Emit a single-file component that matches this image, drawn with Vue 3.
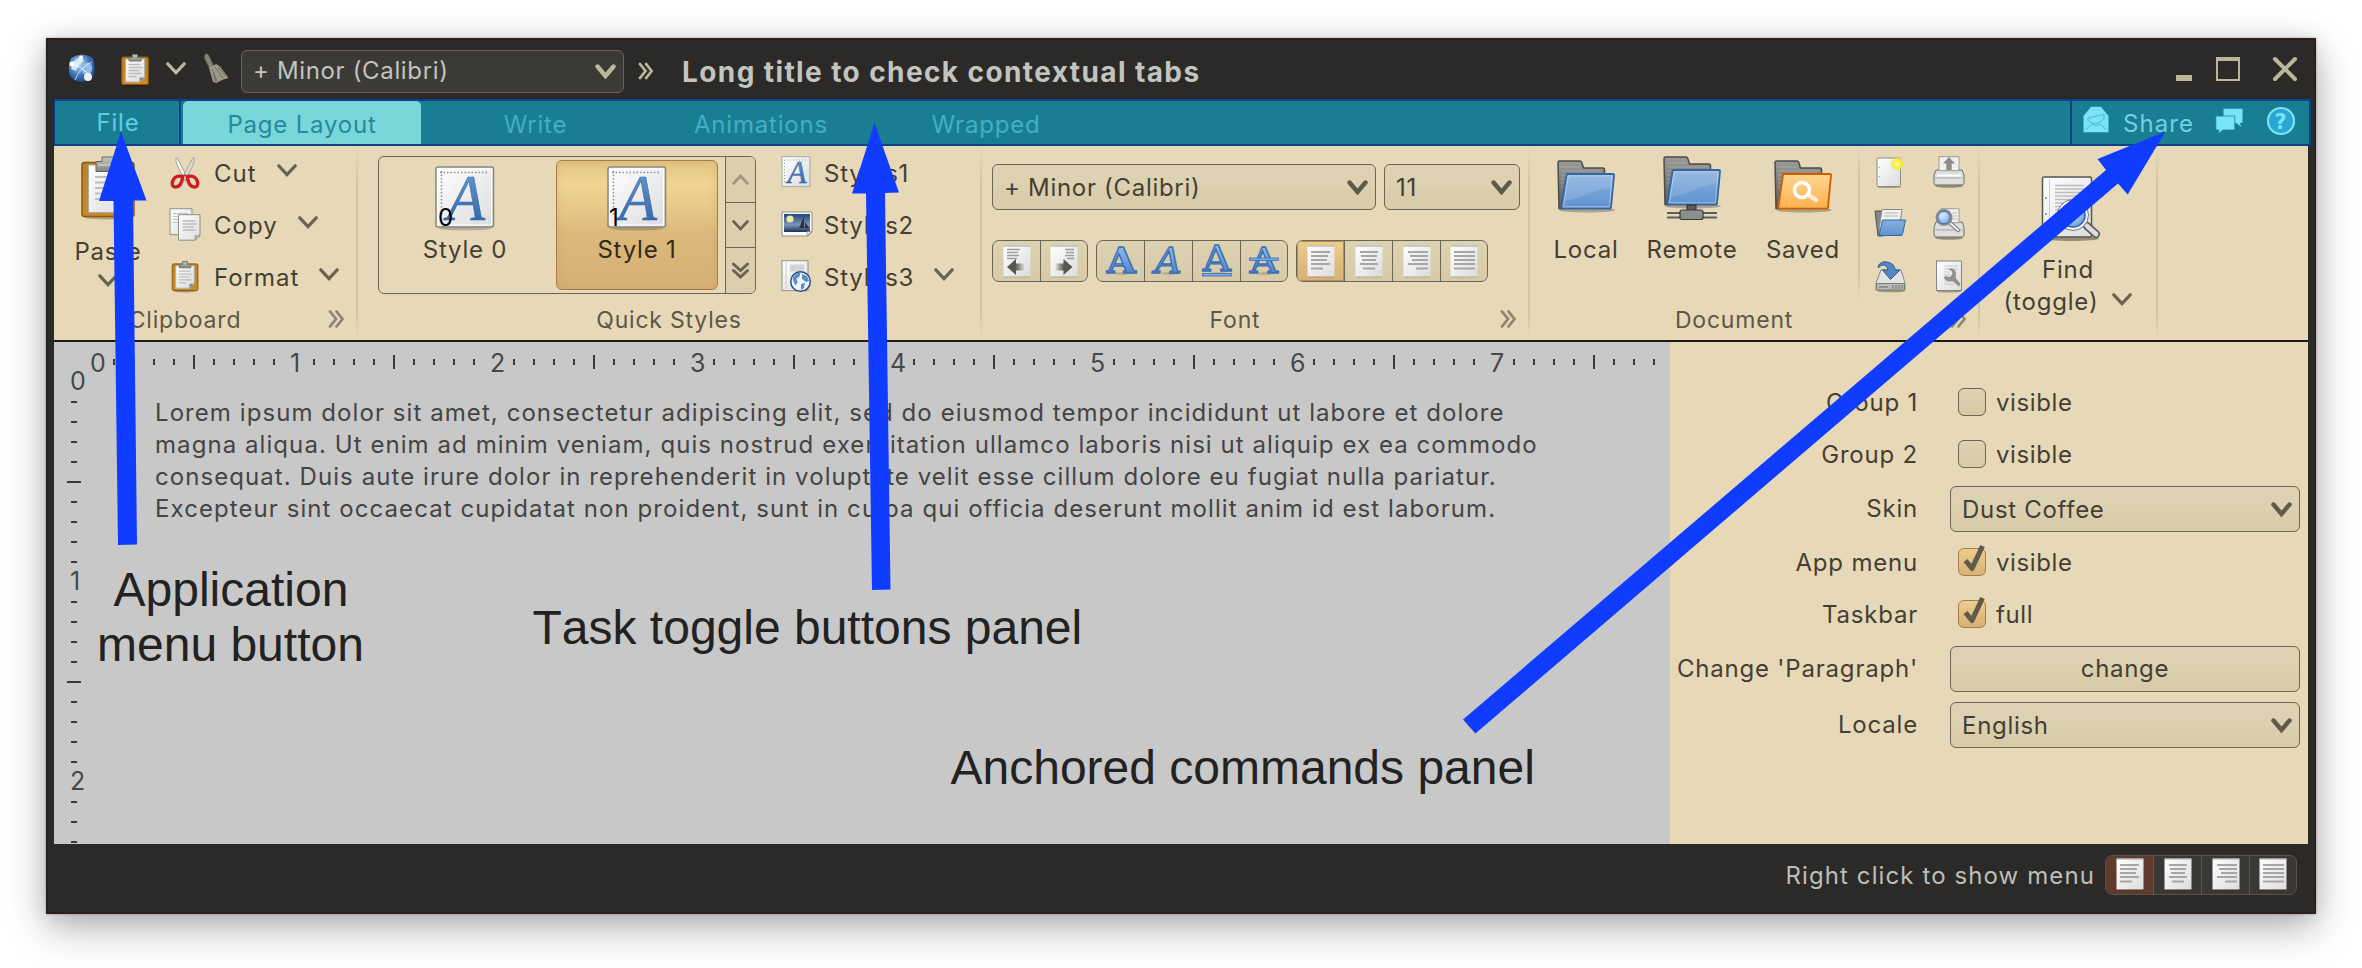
<script setup>
const tabs = [
  { name: 'Page Layout', w: 238, active: true },
  { name: 'Write', w: 229 },
  { name: 'Animations', w: 222 },
  { name: 'Wrapped', w: 228 },
]
const clipboard = [
  { name: 'Cut', icon: 'cut' },
  { name: 'Copy', icon: 'copy' },
  { name: 'Format', icon: 'clip' },
]
const styles = [
  { name: 'Styles1' },
  { name: 'Styles2', icon: 'image' },
  { name: 'Styles3', icon: 'web', more: true },
]
const folders = [
  { name: 'Local', icon: 'local', cls: 'f-local' },
  { name: 'Remote', icon: 'remote', cls: 'f-remote' },
  { name: 'Saved', icon: 'saved', cls: 'f-saved' },
]
const docActions = ['new', 'print', 'open', 'preview', 'save', 'props']
const aligns = ['left', 'center', 'right', 'fill']
const letters = [
  { kind: 'bold', weight: 'bold', slant: 'normal', len: 29 },
  { kind: 'italic', weight: 'normal', slant: 'italic', len: 27 },
  { kind: 'under', weight: 'normal', slant: 'normal', len: 28, bar: 29.5 },
  { kind: 'strike', weight: 'normal', slant: 'normal', len: 28, bar: 14 },
]

const hTicks = []
for (let i = 1; i <= 78; i++) if (i % 10) hTicks.push({ p: 40 + i * 20, big: i % 10 === 5 })
const vTicks = []
for (let i = 1; i <= 23; i++) if (i % 10) vTicks.push({ p: 11 + i * 20, big: i % 10 === 5 })

const lorem = [
  'Lorem ipsum dolor sit amet, consectetur adipiscing elit, sed do eiusmod tempor incididunt ut labore et dolore',
  'magna aliqua. Ut enim ad minim veniam, quis nostrud exercitation ullamco laboris nisi ut aliquip ex ea commodo',
  'consequat. Duis aute irure dolor in reprehenderit in voluptate velit esse cillum dolore eu fugiat nulla pariatur.',
  'Excepteur sint occaecat cupidatat non proident, sunt in culpa qui officia deserunt mollit anim id est laborum.',
]
const form = [
  { label: 'Group 1', kind: 'check', text: 'visible', on: false },
  { label: 'Group 2', kind: 'check', text: 'visible', on: false },
  { label: 'Skin', kind: 'select', text: 'Dust Coffee' },
  { label: 'App menu', kind: 'check', text: 'visible', on: true },
  { label: 'Taskbar', kind: 'check', text: 'full', on: true },
  { label: "Change 'Paragraph'", kind: 'button', text: 'change' },
  { label: 'Locale', kind: 'select', text: 'English' },
]
</script>

<template>
  <div class="desktop">
    <svg class="sprite" aria-hidden="true">
      <defs>
        <linearGradient id="gPaper" x1="0" y1="0" x2="1" y2="1"><stop offset="0" stop-color="#fff" /><stop offset="1" stop-color="#dcdcdc" /></linearGradient>
        <linearGradient id="gBoard" x1="0" y1="0" x2="0" y2="1"><stop offset="0" stop-color="#b9822c" /><stop offset="1" stop-color="#c98a2b" /></linearGradient>
        <linearGradient id="gMetal" x1="0" y1="0" x2="0" y2="1"><stop offset="0" stop-color="#c6c8c2" /><stop offset="1" stop-color="#83857f" /></linearGradient>
        <linearGradient id="gBlue" x1="0" y1="0" x2="0" y2="1"><stop offset="0" stop-color="#88b0de" /><stop offset="1" stop-color="#5f93cf" /></linearGradient>
        <linearGradient id="gInk" x1="0" y1="0" x2="0" y2="1"><stop offset="0" stop-color="#6d9ed4" /><stop offset="1" stop-color="#2b5fa5" /></linearGradient>
        <linearGradient id="gLetter" x1="0" y1="0" x2="0" y2="1"><stop offset="0" stop-color="#a9c6ea" /><stop offset="1" stop-color="#3d7bd0" /></linearGradient>
        <linearGradient id="gOrange" x1="0" y1="0" x2="0" y2="1"><stop offset="0" stop-color="#ffd591" /><stop offset="1" stop-color="#fdb14e" /></linearGradient>
        <linearGradient id="gFolder" x1="0" y1="0" x2="0" y2="1"><stop offset="0" stop-color="#9a9a98" /><stop offset="1" stop-color="#5d5d5b" /></linearGradient>
        <linearGradient id="gSky" x1="0" y1="0" x2="0" y2="1"><stop offset="0" stop-color="#24437a" /><stop offset=".6" stop-color="#7e97b7" /><stop offset="1" stop-color="#1d3055" /></linearGradient>
        <linearGradient id="gArrL" x1="1" y1="0" x2="0" y2="0"><stop offset="0" stop-color="#555753" stop-opacity=".1" /><stop offset=".5" stop-color="#555753" /></linearGradient>
        <linearGradient id="gArrR" x1="0" y1="0" x2="1" y2="0"><stop offset="0" stop-color="#555753" stop-opacity=".1" /><stop offset=".5" stop-color="#555753" /></linearGradient>
        <radialGradient id="gGlobe" cx=".4" cy=".35" r=".7"><stop offset="0" stop-color="#b4d6f6" /><stop offset=".6" stop-color="#3c74b8" /><stop offset="1" stop-color="#1c437f" /></radialGradient>
        <radialGradient id="gStar"><stop offset="0" stop-color="#fffde0" /><stop offset=".35" stop-color="#fff34a" /><stop offset=".7" stop-color="#f8e93a" stop-opacity=".85" /><stop offset="1" stop-color="#f5e338" stop-opacity="0" /></radialGradient>
        <radialGradient id="gLens" cx=".4" cy=".35" r=".7"><stop offset="0" stop-color="#dceafa" /><stop offset="1" stop-color="#6f9fd6" /></radialGradient>
      </defs>
      <symbol id="chev" viewBox="0 0 20 13"><path d="M1.8 1.8 10 10.6 18.200 1.800" fill="none" stroke="currentColor" stroke-width="3.200" stroke-linecap="round" /></symbol>
      <symbol id="vee" viewBox="0 0 21 15"><path d="M2.500 2.500 10.500 12 18.500 2.500" fill="none" stroke="currentColor" stroke-width="4.400" stroke-linecap="round" /></symbol>
      <symbol id="more" viewBox="0 0 17 18"><path d="M2 1.500 8 9 2 16.500M8.500 1.500l6 7.500-6 7.500" fill="none" stroke="currentColor" stroke-width="2.800" stroke-linecap="round" /></symbol>
      <symbol id="down2" viewBox="0 0 17 17"><path d="M1.500 2 8.500 8.500 15.500 2M1.500 8.500l7 6.500 7-6.500" fill="none" stroke="currentColor" stroke-width="3" stroke-linecap="round" /></symbol>
      <symbol id="globe" viewBox="0 0 32 32">
        <path d="M5 5q11-7 22 0 3 10 1 18-3 5-12 6-9-1-12-6-3-8 1-18z" fill="url(#gGlobe)" />
        <path d="M7 9q5-5 9-5l2 4-5 4-3 6-5-2z" fill="#e6f2fc" opacity=".85" />
        <path d="M18 10q6-2 8 3 1 7-4 10-5-1-6-6 0-5 2-7z" fill="#8fbbe6" />
        <path d="M4 11q10 0 22 14M9 27q4-12 17-18" fill="none" stroke="#fff" opacity=".7" />
        <circle cx="6" cy="11" r="2.500" fill="#fff" /><circle cx="22" cy="24" r="4" fill="#fff" opacity=".9" /><circle cx="15" cy="4.500" r="2" fill="#fff" />
      </symbol>
      <symbol id="clip" viewBox="0 0 32 34">
        <ellipse cx="16" cy="32" rx="12" ry="1.500" fill="#000" opacity=".3" />
        <rect x="2.800" y="4" width="26.500" height="27.500" rx="1.500" fill="url(#gBoard)" stroke="#8f5902" />
        <path d="M6.500 6h19v18.500l-5 4.500h-14z" fill="url(#gPaper)" stroke="#b5b5b0" />
        <path d="M25.500 24.500h-5V29z" fill="#888a85" />
        <path d="M9.500 11.500h12M9.500 14.500h14M9.500 17.500h11M9.500 20.500h13M9.500 23.500h8" stroke="#bcbcbc" stroke-width="1.300" />
        <path d="M10 8V4.500h3.500V1.500h5v3H22V8z" fill="url(#gMetal)" stroke="#75776f" />
      </symbol>
      <symbol id="paste" viewBox="0 0 54 64">
        <ellipse cx="27" cy="61" rx="24" ry="2.500" fill="#000" opacity=".25" />
        <rect x="1" y="6.500" width="52" height="54" rx="2.500" fill="url(#gBoard)" stroke="#8f5902" stroke-width="1.500" />
        <path d="M7.500 9h39v38l-8 9.500h-31z" fill="url(#gPaper)" stroke="#a9a9a5" />
        <path d="M14 21h25M14 26.500h28M14 32h24M14 37.500h27M14 43h18" stroke="#bdbdbd" stroke-width="2" />
        <path d="M15 15.500V5.500h6V1h13v4.500h5.500v10z" fill="url(#gMetal)" stroke="#666860" />
        <path d="M17 9h21" stroke="#e0e0dc" />
      </symbol>
      <symbol id="broom" viewBox="0 0 30 32">
        <path d="M5 1.500q2-1.500 3.500.500l5.500 12-4 2.500L4.500 5z" fill="#858575" stroke="#66665a" stroke-width=".8" />
        <path d="m9 15 7-4 4 2.500 8.500 11.500q-6 1-12 5l-3.500-1z" fill="#99988a" />
        <path d="m12 16 5 12m-2-14 8 11m-10-5 3 9m2-15 7 8" stroke="#6f6e62" fill="none" />
      </symbol>
      <symbol id="cut" viewBox="0 0 32 33">
        <path d="M7 1.500q1.500 0 3 4l9 17-3 2L8.500 10Q6 4 7 1.500z" fill="#f1f1ef" stroke="#9a9a96" stroke-width=".9" />
        <path d="M25 1.500q-1.500 0-3 4l-9 17 3 2L23.500 10Q26 4 25 1.500z" fill="#dededb" stroke="#9a9a96" stroke-width=".9" />
        <path d="M13.800 20.500q-9-2-10.600 6.500Q3 31 6.500 31q6 0 7.300-10.500zM18.200 20.500q9-2 10.600 6.500.2 4-3.300 4-6 0-7.300-10.500z" fill="none" stroke="#cc1f1f" stroke-width="3.400" />
        <circle cx="16" cy="19" r="1" fill="#666" />
      </symbol>
      <symbol id="copy" viewBox="0 0 32 33">
        <path d="M1 .7h22v26H1z" fill="url(#gPaper)" stroke="#8f8f8b" />
        <path d="M4 5.500h15M4 8.500h9M4 11.500h9M4 14.500h8" stroke="#c3c3c3" />
        <path d="M9.500 6.700h21.500v21l-5 4.500H9.500z" fill="url(#gPaper)" stroke="#8f8f8b" />
        <path d="M13.500 13h13M13.500 16h14M13.500 19h11M13.500 22h13" stroke="#bbb" stroke-width="1.300" />
        <path d="M31 27.500h-5V32z" fill="#b9b9b5" stroke="#8f8f8b" stroke-width=".6" />
      </symbol>
      <symbol id="image" viewBox="0 0 32 33">
        <path d="M1 4h30v20l-4 4H1z" fill="#fbfbfb" stroke="#8c8e8a" />
        <rect x="3" y="6" width="26" height="18" fill="url(#gSky)" />
        <circle cx="9" cy="11" r="3.600" fill="#fff7a8" opacity=".9" />
        <path d="m23 9-5 11h5zM24 14l4 6h-4z" fill="#2b2d38" />
        <path d="M31 23.500h-5V28z" fill="#ddd" stroke="#888" stroke-width=".6" />
      </symbol>
      <symbol id="web" viewBox="0 0 32 33">
        <rect x="1" y=".7" width="26" height="30" fill="url(#gPaper)" stroke="#8d8f8b" />
        <path d="M9 4.500h14v7H9z" fill="#d3d3d3" /><path d="M5 2v28" stroke="#ccc" />
        <circle cx="19.500" cy="21.500" r="9.800" fill="#eef4fb" stroke="#2c4b8a" stroke-width="1.500" />
        <path d="M11.500 18q3-5 8-5.500l-1 4-3 2 1 4-2 3q-2-3-3-7.500zM21 14l5 2 2 5-3 1-4-3zM20 24l4-1-1 5-3 2z" fill="#5b8dc6" />
      </symbol>
      <symbol id="backfolder" viewBox="0 0 58 64">
        <ellipse cx="30" cy="50" rx="28" ry="2.500" fill="#000" opacity=".25" />
        <path d="M1 2.500q0-1.500 1.500-1.500H23q1.500 0 2 2l1.500 5H46q1.500 0 1.500 2v34L4 48.500H2z" fill="url(#gFolder)" stroke="#4c4c4a" stroke-width="1.500" />
        <path d="M4 7h19M4 11h40M4 15h40M4 19h8M4 23h5M4 27h4" stroke="#b4b4b0" stroke-width="1" opacity=".6" />
      </symbol>
      <symbol id="front" viewBox="0 0 58 64">
        <path d="M9.500 15q0-1 1.300-1H56q1.200 0 1 1.300l-3 32.200q-.2 1.200-1.400 1.200H5.200q-1.200 0-1-1.200z" fill="url(#gBlue)" stroke="#3465a4" stroke-width="1.800" />
        <path d="M11 16h44.500l-1 12Q40 29 32 33.500T7.500 41z" fill="#fff" opacity=".13" />
        <path d="M11.200 15.800h44l-2.800 31h-46z" fill="none" stroke="#fff" opacity=".4" />
      </symbol>
      <symbol id="local" viewBox="0 0 58 64"><g transform="translate(0 4)"><use href="#backfolder" width="58" height="64" /><use href="#front" width="58" height="64" /></g></symbol>
      <symbol id="remote" viewBox="0 0 58 64">
        <use href="#backfolder" width="58" height="64" /><use href="#front" width="58" height="64" />
        <path d="M24 49h9v6h-9z" fill="#5c5c5c" stroke="#2d2d2d" />
        <path d="M4 57h50M4 61.500h50" stroke="#5a5c58" stroke-width="2.200" />
        <rect x="17" y="54" width="23" height="9.500" rx="2" fill="#8d8f8b" stroke="#3a3a3a" stroke-width="1.200" />
      </symbol>
      <symbol id="saved" viewBox="0 0 58 64">
        <g transform="translate(0 4)"><use href="#backfolder" width="58" height="64" />
          <path d="M9 15q0-1 1.300-1H56q1.200 0 1 1.300l-3 32.200q-.2 1.200-1.400 1.200H5.200q-1.200 0-1-1.200z" fill="url(#gOrange)" stroke="#ce5c00" stroke-width="1.800" />
          <circle cx="28" cy="30" r="7.500" fill="none" stroke="#fff" stroke-width="3.600" />
          <path d="m34 34.500 8 5.500" stroke="#fff" stroke-width="4.500" stroke-linecap="round" opacity=".75" /></g>
      </symbol>
      <symbol id="new" viewBox="0 0 32 33">
        <ellipse cx="15" cy="31" rx="12" ry="1" opacity=".3" />
        <rect x="3" y="2" width="23.500" height="28.500" rx="1" fill="url(#gPaper)" stroke="#888a85" />
        <path d="M5.200 11v1M5.200 20v1" stroke="#888" />
        <circle cx="23.500" cy="8" r="7.200" fill="url(#gStar)" />
      </symbol>
      <symbol id="print" viewBox="0 0 32 33">
        <ellipse cx="16" cy="30" rx="14" ry="1.800" opacity=".35" />
        <path d="M3 14h26l2 5v8q0 2-2 2H3q-2 0-2-2v-8z" fill="#dededc" stroke="#6f716d" />
        <path d="M6 .7h20v14H6z" fill="#f0f0ee" stroke="#9b9d99" />
        <path d="m16 1 6 6.500h-3.300V14h-5.400V7.500H10z" fill="#8b8d89" />
        <path d="M4 19.500h24" stroke="#fff" stroke-width="2" /><path d="M2 22h28" stroke="#a8a8a6" />
      </symbol>
      <symbol id="open" viewBox="0 0 32 33">
        <path d="M1 3h8v25H4z" fill="#858783" stroke="#50524f" />
        <path d="M8 1.500h20l-3 20H5z" fill="#f1f1f0" stroke="#8a8c88" />
        <path d="M10.500 5h14M10 8h14" stroke="#b5b5b5" />
        <path d="M8.500 12h23l-3 14.500q-.300 1-1.300 1H5z" fill="url(#gBlue)" stroke="#3465a4" />
      </symbol>
      <symbol id="preview" viewBox="0 0 32 33">
        <ellipse cx="16" cy="30" rx="14" ry="1.800" opacity=".35" />
        <path d="M3 14h26l2 5v8q0 2-2 2H3q-2 0-2-2v-8z" fill="#dededc" stroke="#6f716d" />
        <path d="M8 .7h18v14H8z" fill="#f0f0ee" stroke="#9b9d99" /><path d="M19 5h5M19 8h5M19 11h5" stroke="#bbb" />
        <path d="M2 22h28" stroke="#a8a8a6" />
        <path d="m17 15 8 7" stroke="#777975" stroke-width="4.200" stroke-linecap="round" /><path d="m17 15 8 7" stroke="#eee" stroke-width="2.200" stroke-linecap="round" />
        <circle cx="11" cy="9.500" r="7.500" fill="url(#gLens)" stroke="#8b8d89" stroke-width="2" /><circle cx="11" cy="9.500" r="6.200" fill="none" stroke="#3d6fb0" />
      </symbol>
      <symbol id="save" viewBox="0 0 32 33">
        <ellipse cx="17" cy="31" rx="14" ry="1.300" opacity=".3" />
        <path d="M7 10h20l4 13v7H2v-7z" fill="#e4e4e2" stroke="#858783" />
        <path d="M2.500 23.500h28v6.500h-28z" fill="#b9bbb7" stroke="#7b7d79" />
        <path d="M19 25v4M22 25v4M25 25v4M28 25v4M5 27h9" stroke="#6b6d69" />
        <path d="M4 6Q7 1 13 2q8 1.500 8 8h5l-9.500 9.500L8.500 10H14q-1-5-5-5-3 0-4.500 3z" fill="#5587c2" stroke="#2f5c98" />
      </symbol>
      <symbol id="props" viewBox="0 0 32 33">
        <ellipse cx="16" cy="31.500" rx="12" ry="1" opacity=".3" />
        <rect x="3.500" y="1" width="25" height="29.500" fill="url(#gPaper)" stroke="#858783" />
        <path d="M11 6h14M11 9h14M11 12h6M11 15h6M11 18h5M11 21h9M11 24h10" stroke="#c6c6c6" />
        <path d="M15 9q7-2 8 4 .3 3-.500 4.500l5 6.500-1.500 2.500-6.500-5.500q-5 1.500-8.500-2.500l1-2.500 5 1 2.500-3-1-3z" fill="#8f918d" />
      </symbol>
      <symbol id="find" viewBox="0 0 60 68">
        <ellipse cx="30" cy="63.500" rx="28" ry="2.500" opacity=".35" />
        <rect x="1.500" y="2" width="49" height="60" rx="1.500" fill="url(#gPaper)" stroke="#555753" stroke-width="1.500" />
        <path d="M8.500 4v56" stroke="#cfcfcf" /><path d="M5 22v2M5 38v2M5 54v2" stroke="#888" stroke-width="1.500" />
        <path d="M14 10.500h29M14 14h29M14 17.500h29M14 21h29M14 24.500h29M14 28h29M14 31.500h29M14 35h16M14 38.500h12M14 42h12" stroke="#bdbdbd" stroke-width="1.600" />
        <path d="m46 51 9 8" stroke="#555753" stroke-width="8" stroke-linecap="round" /><path d="m46 51 9 8" stroke="#ddd" stroke-width="5" stroke-linecap="round" />
        <circle cx="32" cy="40" r="15.500" fill="#f4f4f4" stroke="#777975" /><circle cx="32" cy="40" r="12" fill="url(#gLens)" stroke="#3465a4" stroke-width="1.600" />
      </symbol>
      <symbol id="pg" viewBox="0 0 28 33"><rect x="1" y="31" width="26" height="1.500" opacity=".18" /><rect x=".5" y=".5" width="27" height="31" fill="url(#gPaper)" /><path d="M.5 1h27" stroke="#a3a5a0" /></symbol>
      <symbol id="al-left" viewBox="0 0 28 33"><use href="#pg" width="28" height="33" /><path d="M4 7h19M4 11h17M4 15h16M4 19h19M4 23.500h12" stroke="#a6a6a6" stroke-width="1.800" /></symbol>
      <symbol id="al-center" viewBox="0 0 28 33"><use href="#pg" width="28" height="33" /><path d="M5 7h18M6 11h16M7 15h14M5 19h18M8 23.500h12" stroke="#a6a6a6" stroke-width="1.800" /></symbol>
      <symbol id="al-right" viewBox="0 0 28 33"><use href="#pg" width="28" height="33" /><path d="M5 7h20M7 11h18M9 15h16M5 19h20M13 23.500h12" stroke="#a6a6a6" stroke-width="1.800" /></symbol>
      <symbol id="al-fill" viewBox="0 0 28 33"><use href="#pg" width="28" height="33" /><path d="M4 7h21M4 11h21M4 15h21M4 19h21M4 23.500h21" stroke="#a6a6a6" stroke-width="1.800" /></symbol>
      <symbol id="outdent" viewBox="0 0 28 33"><use href="#pg" width="28" height="33" /><path d="M4 4.500h13M4 7.500h11M4 10.500h12M4 13.500h10" stroke="#9c9c9c" stroke-width="1.300" /><path d="m4 22 9-8v4.500h8v7h-8V30z" fill="url(#gArrL)" /></symbol>
      <symbol id="indent" viewBox="0 0 28 33"><use href="#pg" width="28" height="33" /><path d="M15 4.500h9M16 7.500h8M15 10.500h9M17 13.500h7" stroke="#9c9c9c" stroke-width="1.300" /><path d="m22.500 22-9-8v4.500h-8v7h8V30z" fill="url(#gArrR)" /></symbol>
    </svg>

    <main class="window">
      <header class="titlebar">
        <svg class="q-globe"><use href="#globe" /></svg>
        <svg class="q-clip"><use href="#clip" /></svg>
        <svg class="chev q-chev"><use href="#chev" /></svg>
        <svg class="q-broom"><use href="#broom" /></svg>
        <div class="dark-combo"><span>+ Minor (Calibri)</span><svg class="vee"><use href="#vee" /></svg></div>
        <svg class="more q-more"><use href="#more" /></svg>
        <h1>Long title to check contextual tabs</h1>
        <div class="controls">
          <i class="min"></i><i class="max"></i>
          <svg class="close" viewBox="0 0 26 26"><path d="M3 3l20 20M23 3 3 23" stroke="currentColor" stroke-width="4" stroke-linecap="round" /></svg>
        </div>
      </header>

      <nav class="taskbar">
        <button class="file">File</button>
        <button v-for="t in tabs" :key="t.name" class="tab" :class="{ active: t.active }" :style="{ width: t.w + 'px' }">{{ t.name }}</button>
        <div class="anchored">
          <svg class="a-mail" viewBox="0 0 26 27">
            <path d="M.5 10 8 .8h10L25.500 10v16.200H.5z" fill="#79e4f5" />
            <path d="m5 12 16-3.500v4.500q-5 4.500-9 4.500t-7-3zM2 24l6-5M24 24l-6-5M8 18q5 3 10 0" fill="none" stroke="#4fb9cf" />
          </svg>
          <span>Share</span>
          <svg class="a-chat" viewBox="0 0 29 27">
            <path d="M8.500.8h19v14h-2.500l1 4-5-4H8.500z" fill="#79e4f5" />
            <path d="M.8 8h19v14H8l-5 4 .8-4h-3z" fill="#79e4f5" stroke="#1f7f93" stroke-width=".8" />
          </svg>
          <svg class="a-help" viewBox="0 0 30 30">
            <circle cx="15" cy="15" r="13" fill="#2ba5d4" stroke="#79e4f5" stroke-width="2.200" />
            <text x="15" y="22.500" text-anchor="middle" font-family="'DejaVu Sans', sans-serif" font-weight="bold" font-size="21" fill="#79e4f5">?</text>
          </svg>
        </div>
      </nav>

      <section class="ribbon">
        <div class="band clipboard">
          <div class="body">
            <div class="paste"><svg><use href="#paste" /></svg><span>Paste</span><svg class="chev"><use href="#chev" /></svg></div>
            <ul class="list">
              <li v-for="c in clipboard" :key="c.name"><svg class="ico"><use :href="'#' + c.icon" /></svg><span>{{ c.name }}</span><svg class="chev"><use href="#chev" /></svg></li>
            </ul>
          </div>
          <footer><span>Clipboard</span><svg class="more"><use href="#more" /></svg></footer>
        </div>

        <div class="band quick">
          <div class="body">
            <div class="gallery">
              <div v-for="n in [0, 1]" :key="n" class="cell" :class="{ active: n === 1 }">
                <div class="thumb">
                  <svg viewBox="0 0 60 66">
                    <ellipse cx="30" cy="62.500" rx="26" ry="2" fill="#000" opacity=".2" />
                    <rect x="1" y="1" width="57.500" height="60" rx="2" fill="url(#gPaper)" stroke="#858783" stroke-width="1.500" />
                    <rect x="3" y="3" width="53.500" height="56" fill="none" stroke="#fff" />
                    <path d="M5 6.500h48M6.500 5v45" stroke="#8d8d8d" stroke-width="1.500" stroke-dasharray="1.500 2" fill="none" />
                    <text x="12" y="53.500" class="serif-a" font-size="65" stroke-width=".5" textLength="38" lengthAdjust="spacingAndGlyphs">A</text>
                  </svg>
                  <b>{{ n }}</b>
                </div>
                <span>Style {{ n }}</span>
              </div>
              <div class="scroll">
                <button class="dim"><svg class="tiny flip"><use href="#chev" /></svg></button>
                <button><svg class="tiny"><use href="#chev" /></svg></button>
                <button><svg class="dbl"><use href="#down2" /></svg></button>
              </div>
            </div>
            <ul class="list styles">
              <li v-for="s in styles" :key="s.name">
                <svg v-if="s.icon" class="ico"><use :href="'#' + s.icon" /></svg>
                <svg v-else class="ico" viewBox="0 0 32 33">
                  <rect x="1" y=".7" width="28" height="30" fill="url(#gPaper)" stroke="#a5a7a3" />
                  <path d="M3 4h24M3.500 4v22" stroke="#9a9a9a" stroke-dasharray="1 2" fill="none" />
                  <text x="6.500" y="26.500" class="serif-a" font-size="31" stroke-width=".5">A</text>
                </svg>
                <span>{{ s.name }}</span><svg v-if="s.more" class="chev"><use href="#chev" /></svg>
              </li>
            </ul>
          </div>
          <footer><span>Quick Styles</span></footer>
        </div>

        <div class="band font">
          <div class="body">
            <div class="row">
              <div class="combo family"><span>+ Minor (Calibri)</span><svg class="vee"><use href="#vee" /></svg></div>
              <div class="combo size"><span>11</span><svg class="vee"><use href="#vee" /></svg></div>
            </div>
            <div class="row strip-row">
              <div class="strip"><button><svg class="page"><use href="#outdent" /></svg></button><button><svg class="page"><use href="#indent" /></svg></button></div>
              <div class="strip">
                <button v-for="l in letters" :key="l.kind">
                  <svg class="letter" viewBox="0 0 32 34">
                    <ellipse cx="17" cy="29.500" rx="9" ry="1.500" opacity=".15" />
                    <text x="1.800" :y="l.kind === 'under' ? 27 : 28.500" class="slab-a" font-size="35" :font-weight="l.weight" :font-style="l.slant" :textLength="l.len" lengthAdjust="spacingAndGlyphs">A</text>
                    <rect v-if="l.bar" x="1.500" :y="l.bar" width="29" height="2.500" fill="#7fa9e2" stroke="#3a6fb5" stroke-width=".8" />
                  </svg>
                </button>
              </div>
              <div class="strip"><button v-for="(a, i) in aligns" :key="a" :class="{ active: !i }"><svg class="page"><use :href="'#al-' + a" /></svg></button></div>
            </div>
          </div>
          <footer><span>Font</span><svg class="more"><use href="#more" /></svg></footer>
        </div>

        <div class="band document">
          <div class="body">
            <div v-for="f in folders" :key="f.name" class="folder" :class="f.cls"><svg><use :href="'#' + f.icon" /></svg><span>{{ f.name }}</span></div>
            <div class="actions"><svg v-for="a in docActions" :key="a" class="ico"><use :href="'#' + a" /></svg></div>
          </div>
          <footer><span>Document</span><svg class="more"><use href="#more" /></svg></footer>
        </div>

        <div class="band find">
          <svg class="find-ico"><use href="#find" /></svg>
          <span>Find</span>
          <div class="toggle"><span>(toggle)</span><svg class="chev"><use href="#chev" /></svg></div>
        </div>
      </section>

      <section class="work">
        <article class="editor">
          <svg class="hruler">
            <rect v-for="t in hTicks" :key="t.p" :x="t.p - 1" :y="t.big ? 13 : 17" width="2" :height="t.big ? 14 : 6" />
            <text v-for="n in 8" :key="n" :x="36 + (n - 1) * 200" y="29.700">{{ n - 1 }}</text>
          </svg>
          <div class="page-row">
            <svg class="vruler">
              <rect v-for="t in vTicks" :key="t.p" :x="t.big ? 13 : 17" :y="t.p - 1" :width="t.big ? 14 : 6" height="2" />
              <text v-for="n in 3" :key="n" x="16" :y="18.700 + (n - 1) * 200">{{ n - 1 }}</text>
            </svg>
            <p><span v-for="l in lorem" :key="l">{{ l }}</span></p>
          </div>
        </article>
        <aside class="panel">
          <div v-for="f in form" :key="f.label" class="field" :class="{ short: f.kind === 'check' }">
            <label>{{ f.label }}</label>
            <div v-if="f.kind === 'check'" class="check">
              <i :class="{ on: f.on }"><svg v-if="f.on" viewBox="0 0 28 32"><path d="M7.500 16.500 14 24.500 24.500 2" fill="none" stroke="#5f5a49" stroke-width="5" stroke-linecap="butt" stroke-linejoin="round" /></svg></i>
              <span>{{ f.text }}</span>
            </div>
            <div v-else-if="f.kind === 'select'" class="combo"><span>{{ f.text }}</span><svg class="vee"><use href="#vee" /></svg></div>
            <button v-else class="combo push">{{ f.text }}</button>
          </div>
        </aside>
      </section>

      <footer class="status">
        <span>Right click to show menu</span>
        <div class="strip dark"><button v-for="(a, i) in aligns" :key="a" :class="{ active: !i }"><svg class="page"><use :href="'#al-' + a" /></svg></button></div>
      </footer>
    </main>

    <svg class="callouts" viewBox="0 0 2362 968">
      <g class="arrows">
        <polygon points="121,131.500 146.500,200.500 133,200.500 137,544.500 118,545 113.500,201 99,201" />
        <polygon points="874.500,123 899,192.500 885,193 890.500,589.500 872,590 866,193.500 852,193.500" />
        <polygon points="2165.500,131.500 2127.700,194.500 2118,183.500 1475.400,733.500 1463,719.500 2106,170 2097.500,159" />
      </g>
      <text x="113.500" y="606">Application</text>
      <text x="97" y="660.500">menu button</text>
      <text x="532.500" y="644" class="loose">Task toggle buttons panel</text>
      <text x="950.500" y="784">Anchored commands panel</text>
    </svg>
  </div>
</template>

<style>
html,
body {
  background: #fff;
  overflow: hidden;
}
</style>

<style scoped>
.desktop {
  position: relative;
  width: 2362px;
  height: 968px;
  overflow: hidden;
  background: #fff;
  font: 400 24px/30px Inter, 'Liberation Sans', sans-serif;
  letter-spacing: 0.8px;
  color: #453e33;
  box-sizing: border-box;
  padding: 38px 46px 54px;
}
.desktop * { box-sizing: border-box; }
.sprite { position: absolute; width: 0; height: 0; }
svg { display: block; flex: none; overflow: visible; }
button { font: inherit; letter-spacing: inherit; color: inherit; background: none; border: 0; padding: 0; margin: 0; }
span { white-space: nowrap; }
.window {
  width: 2270px;
  height: 876px;
  background: #2c2a28;
  padding: 0 8px;
  box-shadow: inset 0 0 0 2px #2a211c, 0 0 2px rgba(0, 0, 0, 0.35), 0 14px 36px rgba(0, 0, 0, 0.3), 0 0 24px rgba(0, 0, 0, 0.08);
}
.chev { width: 20px; height: 13px; color: #6b6352; }
.vee { width: 21px; height: 15px; color: #5f5a49; }
.more { width: 17px; height: 18px; color: #8f866f; }
.ico { width: 32px; height: 33px; }
.serif-a { font-family: 'Liberation Serif', serif; font-style: italic; letter-spacing: 0; fill: url(#gInk); stroke: #3465a4; }
.slab-a { font-family: 'DejaVu Serif', serif; letter-spacing: 0; fill: url(#gLetter); stroke: #3a6fb5; stroke-width: 1.4; }

.titlebar { height: 61px; display: flex; align-items: center; color: #c2c4bf; padding-top: 6px; }
.q-globe { width: 32px; height: 32px; margin: -5px 0 0 12px; }
.q-clip { width: 32px; height: 34px; margin: -3px 0 0 21px; }
.q-chev { margin: -7px 0 0 15px; color: #b8b89a; }
.q-broom { width: 30px; height: 32px; margin: -5px 0 0 14px; }
.dark-combo {
  width: 383px; height: 43px; margin: -1px 0 0 11px; padding: 0 7px 0 11px;
  display: flex; align-items: center; justify-content: space-between; letter-spacing: 0.65px;
  background: linear-gradient(#3a3935, #3d3b36); border: 1px solid #67645a; border-radius: 6px;
}
.dark-combo .vee { color: #b8b89a; }
.q-more { margin: -2px 0 0 14px; color: #b8b89a; width: 16px; }
h1 { font-size: 28px; line-height: 34px; font-weight: 700; margin: 0 0 0 28px; letter-spacing: 1.4px; white-space: nowrap; }
.controls { margin-left: auto; display: flex; color: #b8b89a; height: 26px; margin-top: -4px; }
.min { width: 16px; height: 6px; background: #b8b89a; margin: 18px 24px 0 0; }
.max { width: 24px; height: 24px; border: 2px solid #b8b89a; border-top-width: 4px; margin: 0 32px 0 0; }
.close { width: 26px; height: 26px; margin: -1px 10px 0 0; }

.taskbar {
  width: 2257px; height: 47px; display: flex; background: #1a7e92; border: 2px solid #0a408c; border-left-width: 1px; color: #4fb9cf;
}
.file { width: 126px; border-right: 2px solid #0a408c; margin-right: 2px; color: #5fcbe0; padding: 1px 0 0 2px; }
.tab { padding-top: 4px; color: #43aec4; }
.tab.active { background: #79d6da; color: #248a9b; border-radius: 5px 5px 0 0; }
.anchored { margin-left: auto; width: 239px; border-left: 2px solid #0a408c; display: flex; align-items: flex-start; color: #6fd2e2; }
.a-mail { width: 26px; height: 27px; margin: 5px 0 0 11px; }
.anchored span { margin: 8px 0 0 14px; letter-spacing: 1.1px; }
.a-chat { width: 29px; height: 27px; margin: 7px 0 0 auto; }
.a-help { width: 30px; height: 30px; margin: 5px 13px 0 22px; }

.ribbon { width: 2254px; height: 194px; display: flex; background: #e7d9b8; }
.band {
  display: flex; flex-direction: column; flex: none;
  border-right: 2px solid; border-image: linear-gradient(#e7d9b8, #d3c6a4 20%, #d3c6a4 85%, #e7d9b8) 1;
}
.body { height: 156px; display: flex; }
.band footer { height: 38px; padding: 3px 11px 0 0; display: flex; align-items: flex-start; font-size: 23px; color: #5e5646; }
.band footer span { flex: 1; text-align: center; }
.band footer .more { margin: 5px 0 0 12px; }
.clipboard { width: 304px; }
.quick { width: 624px; }
.quick footer { padding-right: 0; }
.font { width: 548px; }
.document { width: 450px; }
.find { width: 178px; }

.paste { width: 84px; margin-left: 12px; padding-top: 10px; display: flex; flex-direction: column; align-items: center; }
.paste > svg:first-child { width: 54px; height: 64px; }
.paste span { margin: 17px 0 7px; }
.list { list-style: none; margin: 0; padding: 0 0 0 19px; letter-spacing: 1px; }
.list li { height: 52px; display: flex; align-items: center; }
.list .ico { margin-right: 13px; }
.list span { padding-top: 3px; }
.list .chev { margin: -4px 0 0 20px; }
.list.styles { padding-left: 25px; letter-spacing: 0.8px; }
.list.styles .ico { margin-right: 11px; }

.gallery { width: 378px; height: 138px; margin: 10px 0 0 20px; border: 1.500px solid #6d6654; border-radius: 6px; display: flex; padding-left: 5px; overflow: hidden; }
.cell { flex: none; width: 162px; height: 130px; margin: 3px 0 0 0; display: flex; flex-direction: column; align-items: center; border: 1px solid transparent; border-radius: 6px; }
.cell.active { margin-left: 10px; background: linear-gradient(#e4c583, #f0d592 18%, #e2c182 48%, #dcb97b 55%, #d6b074); border-color: #a97c50; box-shadow: inset 0 0 8px rgba(200, 150, 80, 0.35); color: #332a1c; }
.thumb { position: relative; margin-top: 5px; width: 60px; height: 66px; }
.thumb svg { width: 60px; height: 66px; }
.thumb b { position: absolute; left: 3px; bottom: -1px; font-weight: 400; color: #000; letter-spacing: 0; }
.cell.active .thumb b { left: 2px; }
.cell > span { margin-top: 3px; }
.scroll { width: 30px; margin-left: auto; border-left: 1.500px solid #6d6654; display: flex; flex-direction: column; background: #dbcfae; color: #6b6352; }
.scroll button { flex: 1; display: flex; align-items: center; justify-content: center; }
.scroll button + button { border-top: 1.500px solid #6d6654; }
.scroll .dim { color: #a0967d; }
.tiny { width: 17px; height: 11px; }
.flip { transform: scaleY(-1); }
.dbl { width: 17px; height: 17px; }

.font .body { flex-direction: column; padding: 18px 0 0 10px; }
.row { display: flex; gap: 8px; }
.combo {
  height: 46px; display: flex; align-items: center; justify-content: space-between; padding: 0 7px 0 11px; letter-spacing: 0.7px;
  background: linear-gradient(#ddd2b1, #dcd1b0 45%, #d6caa7); border: 1.500px solid #6d6654; border-radius: 6px; color: #453e33;
}
.combo span { padding-top: 1px; }
.family { width: 384px; }
.size { width: 136px; }
.strip-row { margin-top: 30px; }
.strip { height: 42px; display: flex; border: 1.500px solid #6d6654; border-radius: 7px; overflow: hidden; background: linear-gradient(#ddd2b1, #d6caa7); }
.strip button { width: 48px; display: flex; align-items: center; justify-content: center; border-left: 1.500px solid #6d6654; }
.strip button:first-child, .strip button:last-child { width: 47px; }
.strip button:first-child { border-left: 0; }
.strip .active { background: linear-gradient(#eccf8c, #e0be80 50%, #d6b074); box-shadow: inset 0 0 0 1px #b98a5a; }
.page { width: 28px; height: 33px; }
.letter { width: 32px; height: 34px; }

.folder { padding-top: 10px; display: flex; flex-direction: column; align-items: center; }
.folder svg { width: 58px; height: 64px; }
.folder span { margin-top: 15px; }
.f-local { width: 106px; margin-left: 3px; }
.f-remote { width: 106px; }
.f-saved { width: 110px; margin-left: 3px; }
.actions { flex: 1; display: grid; grid-template-columns: 59px 59px; grid-auto-rows: 52px; place-items: center; border-left: 2px solid; border-image: linear-gradient(#e7d9b8, #d3c6a4 20%, #d3c6a4 80%, #e7d9b8) 1; }

.find { align-items: center; padding-top: 29px; }
.find-ico { width: 60px; height: 68px; margin-left: 6px; }
.find > span { margin-top: 12px; }
.toggle { display: flex; align-items: center; margin-top: 2px; }
.toggle .chev { margin: -5px 0 0 14px; }

.work { width: 2254px; height: 504px; display: flex; border-top: 2px solid #1d1b1a; }
.editor { width: 1616px; height: 502px; background: #c8c8c8; overflow: hidden; color: #444; }
.hruler { width: 1616px; height: 29px; }
.page-row { display: flex; height: 473px; }
.vruler { width: 34px; height: 473px; }
.hruler rect, .vruler rect { fill: #3a3a3a; }
.hruler text, .vruler text { fill: #484848; font-size: 25px; letter-spacing: 0; }
p { margin: 26px 0 0 67px; line-height: 32px; letter-spacing: 1.07px; }
p span { display: block; }

.panel { width: 638px; background: #e7d9b8; padding-top: 34px; }
.field { display: flex; align-items: center; height: 56px; }
.field.short { height: 52px; }
.field label { width: 248px; text-align: right; margin-right: 32px; white-space: nowrap; padding-top: 2px; }
.field .combo { width: 350px; margin-top: 2px; }
.field .push { justify-content: center; padding: 0; }
.check { display: flex; align-items: center; padding-left: 8px; letter-spacing: 0.6px; }
.check i { width: 28px; height: 28px; border: 1.500px solid #6d6654; border-radius: 6px; background: linear-gradient(#ddd2b1, #d6caa7); }
.check i.on { background: linear-gradient(#eccf8c, #d6b074); border-color: #a97c50; }
.check i svg { width: 28px; height: 32px; margin: -5px 0 0 -1px; }
.check span { margin-left: 10px; padding-top: 2px; }

.status { height: 70px; display: flex; justify-content: flex-end; color: #bcbfba; padding: 11px 11px 0 0; }
.status span { margin: 6px 10px 0 0; letter-spacing: 1.1px; }
.dark { height: 40px; background: #3a3834; border: 1px solid #57524a; }
.dark button { border-color: #5d574e; padding-bottom: 1px; }
.dark .active { background: #5f3b2b; box-shadow: none; }

.callouts { position: absolute; left: 0; top: 0; width: 2362px; height: 968px; letter-spacing: 0; }
.arrows { fill: #103cff; }
.callouts text { font: 48px 'Liberation Sans', Arial, sans-serif; fill: #222; }
.callouts .loose { font-kerning: none; }
</style>
